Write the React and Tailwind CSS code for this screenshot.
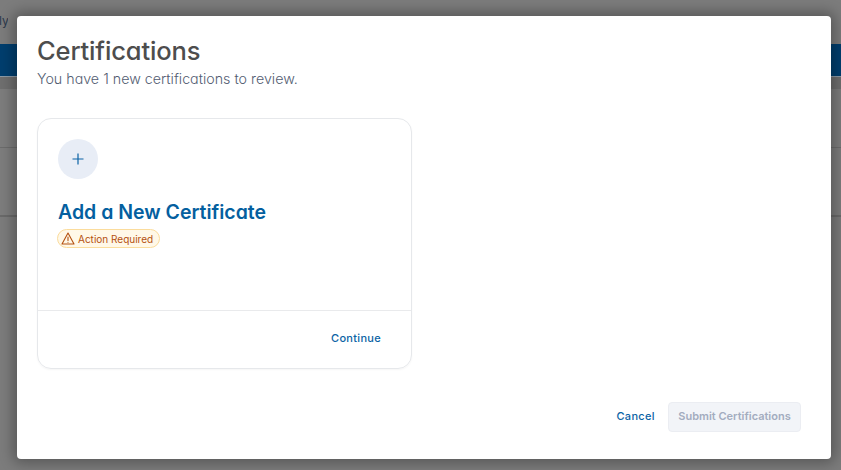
import React from "react";

export default function App() {
  return (
    <div className="relative h-[470px] w-[841px] overflow-hidden bg-[#7c7c7c] font-['Inter',sans-serif]">
      <div className="flex h-[44px] items-start pt-[12px] text-[12px] text-[#2d3a4c]">
        <span className="ml-[-1px] w-[9px] overflow-hidden text-right">ly</span>
      </div>
      <div className="h-[33px] border-b border-[#8c9aa6] bg-[#003e6e]" />
      <div className="h-[12px] bg-[#6f6f6f]" />
      <div className="h-[59px] border-b border-[#6c6c6c] bg-[#7d7d7d]" />
      <div className="h-[69px] border-b-2 border-[#6a6a6a] bg-[#7d7d7d]" />

      <div className="absolute inset-x-0 top-[16px] bottom-[11px] mr-[10px] ml-[17px] flex flex-col rounded-[4px] bg-white pt-[19px] pr-[30px] pb-[27px] pl-[20px] shadow-[0_0_14px_4px_rgba(0,0,0,0.3)]">
        <h1 className="text-[25.5px] leading-[32px] font-medium tracking-[-0.15px] text-[#4d4d4d] [font-feature-settings:'cv11']">Certifications</h1>
        <p className="mt-[2px] text-[14.25px] leading-[20px] font-light text-[#535d72] [font-feature-settings:'cv11']">You have 1 new certifications to review.</p>

        <div className="mt-[29px] flex h-[251px] w-[375px] flex-col rounded-[14px] border border-[#e6e8eb] shadow-[0_1px_2px_rgba(0,0,0,0.04)]">
          <div className="flex-1 px-[20px] pt-[20px]">
            <div className="flex h-[40px] w-[40px] items-center justify-center rounded-full bg-[#e8edf6]">
              <svg width="12" height="12" viewBox="0 0 12 12" fill="none" stroke="#0b63a5" strokeWidth="1.2">
                <path d="M6 0.5v11M0.5 6h11" />
              </svg>
            </div>
            <h2 className="mt-[20px] text-[19.5px] leading-[26px] font-semibold text-[#045f9f] [font-feature-settings:'cv11']">Add a New Certificate</h2>
            <div className="mt-[4px] ml-[-1px] inline-flex h-[19px] items-center gap-[3px] rounded-full border border-[#fbdc9c] bg-[#fff8e8] px-[3px] pr-[6px]">
              <svg width="14" height="13" viewBox="0 0 14 13" fill="none" stroke="#b4500f" strokeWidth="1.1" strokeLinejoin="round" strokeLinecap="round">
                <path d="M7 1 L13 12 H1 Z" />
                <path d="M7 5v3.5M7 10.2v.1" />
              </svg>
              <span className="text-[10px] leading-none text-[#b4500f] [font-feature-settings:'cv11']">Action Required</span>
            </div>
          </div>
          <div className="flex h-[58px] items-center justify-end border-t border-[#e9eaec] pr-[30px] pb-[2px]">
            <span className="text-[11px] font-medium tracking-[0.3px] text-[#0b63a5]">Continue</span>
          </div>
        </div>

        <div className="mt-auto flex items-center justify-end gap-[13px]">
          <span className="mb-[2px] text-[11px] font-medium tracking-[0.35px] text-[#0b63a5]">Cancel</span>
          <button className="h-[30px] w-[133px] rounded-[4px] border border-[#ebedf2] bg-[#f2f4f8] pb-[2px] text-[11px] font-semibold text-[#a3acbf]">Submit Certifications</button>
        </div>
      </div>
    </div>
  );
}
